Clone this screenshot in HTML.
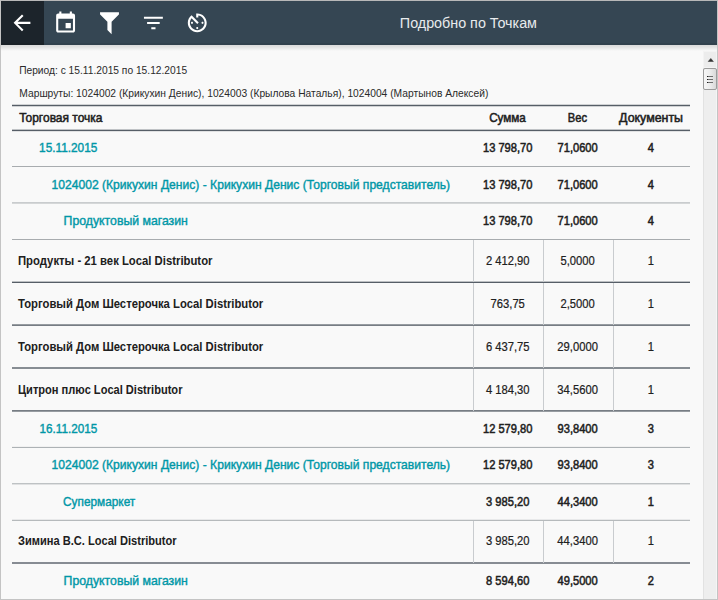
<!DOCTYPE html>
<html><head><meta charset="utf-8"><style>
html,body{margin:0;padding:0;}
body{width:718px;height:600px;overflow:hidden;position:relative;background:#f9f9f9;font-family:"Liberation Sans", sans-serif;}
svg text{font-family:"Liberation Sans", sans-serif;white-space:pre;}
</style></head><body>
<div style="position:absolute;left:12px;top:104px;width:678px;height:1px;background:#d0d2d4"></div>
<div style="position:absolute;left:12px;top:105px;width:678px;height:1px;background:#565e67"></div>
<div style="position:absolute;left:12px;top:106px;width:678px;height:1px;background:#d0d2d4"></div>
<div style="position:absolute;left:12px;top:129px;width:678px;height:1px;background:#c0c3c6"></div>
<div style="position:absolute;left:12px;top:130px;width:678px;height:1px;background:#565e67"></div>
<div style="position:absolute;left:12px;top:131px;width:678px;height:1px;background:#e1e2e3"></div>
<div style="position:absolute;left:12px;top:166px;width:678px;height:1px;background:#a8acaf"></div>
<div style="position:absolute;left:12px;top:202px;width:678px;height:1px;background:#c9ccce"></div>
<div style="position:absolute;left:12px;top:203px;width:678px;height:1px;background:#d5d7d8"></div>
<div style="position:absolute;left:12px;top:239px;width:678px;height:1px;background:#a8acaf"></div>
<div style="position:absolute;left:12px;top:281px;width:678px;height:1px;background:#bdc0c3"></div>
<div style="position:absolute;left:12px;top:282px;width:678px;height:1px;background:#565e67"></div>
<div style="position:absolute;left:12px;top:324px;width:678px;height:1px;background:#979ca1"></div>
<div style="position:absolute;left:12px;top:325px;width:678px;height:1px;background:#777d84"></div>
<div style="position:absolute;left:12px;top:367px;width:678px;height:1px;background:#878d93"></div>
<div style="position:absolute;left:12px;top:368px;width:678px;height:1px;background:#878d93"></div>
<div style="position:absolute;left:12px;top:410px;width:678px;height:1px;background:#777d84"></div>
<div style="position:absolute;left:12px;top:411px;width:678px;height:1px;background:#979ca1"></div>
<div style="position:absolute;left:12px;top:446px;width:678px;height:1px;background:#f1f1f1"></div>
<div style="position:absolute;left:12px;top:447px;width:678px;height:1px;background:#adb2b5"></div>
<div style="position:absolute;left:12px;top:483px;width:678px;height:1px;background:#bec2c4"></div>
<div style="position:absolute;left:12px;top:484px;width:678px;height:1px;background:#e0e1e2"></div>
<div style="position:absolute;left:12px;top:519px;width:678px;height:1px;background:#e8e9ea"></div>
<div style="position:absolute;left:12px;top:520px;width:678px;height:1px;background:#b6babc"></div>
<div style="position:absolute;left:12px;top:562px;width:678px;height:1px;background:#878c93"></div>
<div style="position:absolute;left:12px;top:563px;width:678px;height:1px;background:#878c93"></div>
<div style="position:absolute;left:473px;top:240px;width:1px;height:42px;background:#c9cccf"></div>
<div style="position:absolute;left:543px;top:240px;width:1px;height:42px;background:#c9cccf"></div>
<div style="position:absolute;left:613px;top:240px;width:1px;height:42px;background:#c9cccf"></div>
<div style="position:absolute;left:473px;top:283px;width:1px;height:42px;background:#c9cccf"></div>
<div style="position:absolute;left:543px;top:283px;width:1px;height:42px;background:#c9cccf"></div>
<div style="position:absolute;left:613px;top:283px;width:1px;height:42px;background:#c9cccf"></div>
<div style="position:absolute;left:473px;top:326px;width:1px;height:42px;background:#c9cccf"></div>
<div style="position:absolute;left:543px;top:326px;width:1px;height:42px;background:#c9cccf"></div>
<div style="position:absolute;left:613px;top:326px;width:1px;height:42px;background:#c9cccf"></div>
<div style="position:absolute;left:473px;top:369px;width:1px;height:42px;background:#c9cccf"></div>
<div style="position:absolute;left:543px;top:369px;width:1px;height:42px;background:#c9cccf"></div>
<div style="position:absolute;left:613px;top:369px;width:1px;height:42px;background:#c9cccf"></div>
<div style="position:absolute;left:473px;top:521px;width:1px;height:42px;background:#c9cccf"></div>
<div style="position:absolute;left:543px;top:521px;width:1px;height:42px;background:#c9cccf"></div>
<div style="position:absolute;left:613px;top:521px;width:1px;height:42px;background:#c9cccf"></div>
<div style="position:absolute;left:1px;top:1px;width:716px;height:44px;background:#354653"></div>
<div style="position:absolute;left:1px;top:1px;width:43px;height:44px;background:#1c242b"></div>
<div style="position:absolute;left:1px;top:43px;width:716px;height:2px;background:rgba(0,0,0,0.07)"></div>
<div style="position:absolute;left:1px;top:45px;width:716px;height:6px;background:linear-gradient(to bottom, rgba(0,0,0,0.12), rgba(0,0,0,0.1) 25%, rgba(0,0,0,0.0))"></div>
<svg style="position:absolute;left:0;top:0" width="718" height="600" viewBox="0 0 718 600">
<g fill="#ffffff"><g transform="translate(9.400 10.250) scale(1.05)"><path d="M20 11H7.83l5.59-5.59L12 4l-8 8 8 8 1.41-1.41L7.83 13H20v-2z"/></g><g transform="translate(53.000 10.450) scale(1.05)"><path d="M17 12h-5v5h5v-5zM16 1v2H8V1H6v2H5c-1.11 0-1.99.9-1.99 2L3 19c0 1.1.89 2 2 2h14c1.1 0 2-.9 2-2V5c0-1.1-.9-2-2-2h-1V1h-2zm3 18H5V8h14v11z"/></g><g transform="translate(96.900 10.178) scale(1.05)"><path d="M3,2H21V4H20.92L14,10.92V22.91L10,18.91V10.91L3.09,4H3V2Z"/></g><g transform="translate(140.800 10.400) scale(1.05)"><path d="M10 18h4v-2h-4v2zM3 6v2h18V6H3zm3 7h12v-2H6v2z"/></g><g transform="translate(184.650 10.250) scale(1.05)"><path d="M11 17c0 .55.45 1 1 1s1-.45 1-1-.45-1-1-1-1 .45-1 1zm0-14v4h2V5.08c3.39.49 6 3.39 6 6.92 0 3.87-3.13 7-7 7s-7-3.13-7-7c0-1.68.59-3.22 1.58-4.5L12 13l1.41-1.41-6.8-6.8v.02C4.42 6.45 3 9.05 3 12c0 4.97 4.02 9 9 9 4.97 0 9-4.03 9-9s-4.03-9-9-9h-1zm7 9c0-.55-.45-1-1-1s-1 .45-1 1 .45 1 1 1 1-.45 1-1zM6 12c0 .55.45 1 1 1s1-.45 1-1-.45-1-1-1-1 .45-1 1z"/></g></g>
<text x="399.85" y="27.90" font-size="15.1" font-weight="400" fill="#e8ebed" textLength="137.11" lengthAdjust="spacingAndGlyphs">Подробно по Точкам</text>
<text x="19.13" y="73.70" font-size="11.2" font-weight="400" fill="#2a2a2a" textLength="167.97" lengthAdjust="spacingAndGlyphs">Период: с 15.11.2015 по 15.12.2015</text>
<text x="19.30" y="96.90" font-size="11.2" font-weight="400" fill="#2a2a2a" textLength="469.05" lengthAdjust="spacingAndGlyphs">Маршруты: 1024002 (Крикухин Денис), 1024003 (Крылова Наталья), 1024004 (Мартынов Алексей)</text>
<text x="19.15" y="121.90" font-size="11.9" font-weight="400" fill="#202020" stroke="#202020" stroke-width="0.5" textLength="83.41" lengthAdjust="spacingAndGlyphs">Торговая точка</text>
<text x="489.15" y="121.90" font-size="11.9" font-weight="400" fill="#202020" stroke="#202020" stroke-width="0.5" textLength="36.72" lengthAdjust="spacingAndGlyphs">Сумма</text>
<text x="567.75" y="121.90" font-size="11.9" font-weight="400" fill="#202020" stroke="#202020" stroke-width="0.5" textLength="19.25" lengthAdjust="spacingAndGlyphs">Вес</text>
<text x="619.12" y="121.90" font-size="11.9" font-weight="400" fill="#202020" stroke="#202020" stroke-width="0.5" textLength="63.92" lengthAdjust="spacingAndGlyphs">Документы</text>
<text x="39.09" y="151.80" font-size="11.9" font-weight="400" fill="#0097a7" stroke="#0097a7" stroke-width="0.38" textLength="58.24" lengthAdjust="spacingAndGlyphs">15.11.2015</text>
<text x="482.99" y="151.80" font-size="11.9" font-weight="400" fill="#202020" stroke="#202020" stroke-width="0.5" textLength="49.46" lengthAdjust="spacingAndGlyphs">13 798,70</text>
<text x="557.53" y="151.80" font-size="11.9" font-weight="400" fill="#202020" stroke="#202020" stroke-width="0.5" textLength="40.19" lengthAdjust="spacingAndGlyphs">71,0600</text>
<text x="647.73" y="151.80" font-size="11.9" font-weight="400" fill="#202020" stroke="#202020" stroke-width="0.5" textLength="6.18" lengthAdjust="spacingAndGlyphs">4</text>
<text x="51.54" y="188.60" font-size="11.9" font-weight="400" fill="#0097a7" stroke="#0097a7" stroke-width="0.38" textLength="398.63" lengthAdjust="spacingAndGlyphs">1024002 (Крикухин Денис) - Крикухин Денис (Торговый представитель)</text>
<text x="482.99" y="188.60" font-size="11.9" font-weight="400" fill="#202020" stroke="#202020" stroke-width="0.5" textLength="49.46" lengthAdjust="spacingAndGlyphs">13 798,70</text>
<text x="557.53" y="188.60" font-size="11.9" font-weight="400" fill="#202020" stroke="#202020" stroke-width="0.5" textLength="40.19" lengthAdjust="spacingAndGlyphs">71,0600</text>
<text x="647.73" y="188.60" font-size="11.9" font-weight="400" fill="#202020" stroke="#202020" stroke-width="0.5" textLength="6.18" lengthAdjust="spacingAndGlyphs">4</text>
<text x="63.59" y="224.70" font-size="11.9" font-weight="400" fill="#0097a7" stroke="#0097a7" stroke-width="0.38" textLength="124.30" lengthAdjust="spacingAndGlyphs">Продуктовый магазин</text>
<text x="482.99" y="224.70" font-size="11.9" font-weight="400" fill="#202020" stroke="#202020" stroke-width="0.5" textLength="49.46" lengthAdjust="spacingAndGlyphs">13 798,70</text>
<text x="557.53" y="224.70" font-size="11.9" font-weight="400" fill="#202020" stroke="#202020" stroke-width="0.5" textLength="40.19" lengthAdjust="spacingAndGlyphs">71,0600</text>
<text x="647.73" y="224.70" font-size="11.9" font-weight="400" fill="#202020" stroke="#202020" stroke-width="0.5" textLength="6.18" lengthAdjust="spacingAndGlyphs">4</text>
<text x="17.97" y="264.60" font-size="11.9" font-weight="700" fill="#202020" textLength="194.48" lengthAdjust="spacingAndGlyphs">Продукты - 21 век Local Distributor</text>
<text x="485.89" y="264.60" font-size="11.9" font-weight="400" fill="#202020" stroke="#202020" stroke-width="0.2" textLength="43.65" lengthAdjust="spacingAndGlyphs">2 412,90</text>
<text x="560.47" y="264.60" font-size="11.9" font-weight="400" fill="#202020" stroke="#202020" stroke-width="0.2" textLength="34.30" lengthAdjust="spacingAndGlyphs">5,0000</text>
<text x="647.70" y="264.60" font-size="11.9" font-weight="400" fill="#202020" stroke="#202020" stroke-width="0.2" textLength="6.24" lengthAdjust="spacingAndGlyphs">1</text>
<text x="18.00" y="307.60" font-size="11.9" font-weight="700" fill="#202020" textLength="245.25" lengthAdjust="spacingAndGlyphs">Торговый Дом Шестерочка Local Distributor</text>
<text x="490.57" y="307.60" font-size="11.9" font-weight="400" fill="#202020" stroke="#202020" stroke-width="0.2" textLength="34.30" lengthAdjust="spacingAndGlyphs">763,75</text>
<text x="560.47" y="307.60" font-size="11.9" font-weight="400" fill="#202020" stroke="#202020" stroke-width="0.2" textLength="34.30" lengthAdjust="spacingAndGlyphs">2,5000</text>
<text x="647.70" y="307.60" font-size="11.9" font-weight="400" fill="#202020" stroke="#202020" stroke-width="0.2" textLength="6.24" lengthAdjust="spacingAndGlyphs">1</text>
<text x="18.00" y="350.50" font-size="11.9" font-weight="700" fill="#202020" textLength="245.25" lengthAdjust="spacingAndGlyphs">Торговый Дом Шестерочка Local Distributor</text>
<text x="485.89" y="350.50" font-size="11.9" font-weight="400" fill="#202020" stroke="#202020" stroke-width="0.2" textLength="43.65" lengthAdjust="spacingAndGlyphs">6 437,75</text>
<text x="557.35" y="350.50" font-size="11.9" font-weight="400" fill="#202020" stroke="#202020" stroke-width="0.2" textLength="40.54" lengthAdjust="spacingAndGlyphs">29,0000</text>
<text x="647.70" y="350.50" font-size="11.9" font-weight="400" fill="#202020" stroke="#202020" stroke-width="0.2" textLength="6.24" lengthAdjust="spacingAndGlyphs">1</text>
<text x="18.00" y="393.50" font-size="11.9" font-weight="700" fill="#202020" textLength="164.45" lengthAdjust="spacingAndGlyphs">Цитрон плюс Local Distributor</text>
<text x="485.89" y="393.50" font-size="11.9" font-weight="400" fill="#202020" stroke="#202020" stroke-width="0.2" textLength="43.65" lengthAdjust="spacingAndGlyphs">4 184,30</text>
<text x="557.35" y="393.50" font-size="11.9" font-weight="400" fill="#202020" stroke="#202020" stroke-width="0.2" textLength="40.54" lengthAdjust="spacingAndGlyphs">34,5600</text>
<text x="647.70" y="393.50" font-size="11.9" font-weight="400" fill="#202020" stroke="#202020" stroke-width="0.2" textLength="6.24" lengthAdjust="spacingAndGlyphs">1</text>
<text x="39.59" y="432.70" font-size="11.9" font-weight="400" fill="#0097a7" stroke="#0097a7" stroke-width="0.38" textLength="57.64" lengthAdjust="spacingAndGlyphs">16.11.2015</text>
<text x="482.99" y="432.70" font-size="11.9" font-weight="400" fill="#202020" stroke="#202020" stroke-width="0.5" textLength="49.46" lengthAdjust="spacingAndGlyphs">12 579,80</text>
<text x="557.53" y="432.70" font-size="11.9" font-weight="400" fill="#202020" stroke="#202020" stroke-width="0.5" textLength="40.19" lengthAdjust="spacingAndGlyphs">93,8400</text>
<text x="647.73" y="432.70" font-size="11.9" font-weight="400" fill="#202020" stroke="#202020" stroke-width="0.5" textLength="6.18" lengthAdjust="spacingAndGlyphs">3</text>
<text x="51.54" y="469.20" font-size="11.9" font-weight="400" fill="#0097a7" stroke="#0097a7" stroke-width="0.38" textLength="398.63" lengthAdjust="spacingAndGlyphs">1024002 (Крикухин Денис) - Крикухин Денис (Торговый представитель)</text>
<text x="482.99" y="469.20" font-size="11.9" font-weight="400" fill="#202020" stroke="#202020" stroke-width="0.5" textLength="49.46" lengthAdjust="spacingAndGlyphs">12 579,80</text>
<text x="557.53" y="469.20" font-size="11.9" font-weight="400" fill="#202020" stroke="#202020" stroke-width="0.5" textLength="40.19" lengthAdjust="spacingAndGlyphs">93,8400</text>
<text x="647.73" y="469.20" font-size="11.9" font-weight="400" fill="#202020" stroke="#202020" stroke-width="0.5" textLength="6.18" lengthAdjust="spacingAndGlyphs">3</text>
<text x="63.09" y="505.50" font-size="11.9" font-weight="400" fill="#0097a7" stroke="#0097a7" stroke-width="0.38" textLength="72.17" lengthAdjust="spacingAndGlyphs">Супермаркет</text>
<text x="486.08" y="505.50" font-size="11.9" font-weight="400" fill="#202020" stroke="#202020" stroke-width="0.5" textLength="43.27" lengthAdjust="spacingAndGlyphs">3 985,20</text>
<text x="557.53" y="505.50" font-size="11.9" font-weight="400" fill="#202020" stroke="#202020" stroke-width="0.5" textLength="40.19" lengthAdjust="spacingAndGlyphs">44,3400</text>
<text x="647.73" y="505.50" font-size="11.9" font-weight="400" fill="#202020" stroke="#202020" stroke-width="0.5" textLength="6.18" lengthAdjust="spacingAndGlyphs">1</text>
<text x="18.00" y="545.40" font-size="11.9" font-weight="700" fill="#202020" textLength="158.65" lengthAdjust="spacingAndGlyphs">Зимина В.С. Local Distributor</text>
<text x="485.89" y="545.40" font-size="11.9" font-weight="400" fill="#202020" stroke="#202020" stroke-width="0.2" textLength="43.65" lengthAdjust="spacingAndGlyphs">3 985,20</text>
<text x="557.35" y="545.40" font-size="11.9" font-weight="400" fill="#202020" stroke="#202020" stroke-width="0.2" textLength="40.54" lengthAdjust="spacingAndGlyphs">44,3400</text>
<text x="647.70" y="545.40" font-size="11.9" font-weight="400" fill="#202020" stroke="#202020" stroke-width="0.2" textLength="6.24" lengthAdjust="spacingAndGlyphs">1</text>
<text x="63.59" y="585.00" font-size="11.9" font-weight="400" fill="#0097a7" stroke="#0097a7" stroke-width="0.38" textLength="124.30" lengthAdjust="spacingAndGlyphs">Продуктовый магазин</text>
<text x="486.08" y="585.00" font-size="11.9" font-weight="400" fill="#202020" stroke="#202020" stroke-width="0.5" textLength="43.27" lengthAdjust="spacingAndGlyphs">8 594,60</text>
<text x="557.53" y="585.00" font-size="11.9" font-weight="400" fill="#202020" stroke="#202020" stroke-width="0.5" textLength="40.19" lengthAdjust="spacingAndGlyphs">49,5000</text>
<text x="647.73" y="585.00" font-size="11.9" font-weight="400" fill="#202020" stroke="#202020" stroke-width="0.5" textLength="6.18" lengthAdjust="spacingAndGlyphs">2</text>
</svg>
<div style="position:absolute;left:703px;top:51px;width:14px;height:548px;background:#eeeeee;border-left:1px solid #e2e2e2;box-sizing:border-box"></div>
<div style="position:absolute;left:716px;top:51px;width:1px;height:548px;background:#f5f5f5"></div>
<div style="position:absolute;left:703px;top:51px;width:14px;height:17px;background:#ececec;box-sizing:border-box;border:1px solid #f3f3f3"></div>
<svg style="position:absolute;left:700px;top:50px" width="18" height="18" viewBox="0 0 18 18"><path d="M8.2 11.5 L10.8 8.4 L13.4 11.5 Z" fill="#333" stroke="#333" stroke-width="0.5" stroke-linejoin="round"/></svg>
<div style="position:absolute;left:703px;top:68px;width:13.5px;height:21.5px;box-sizing:border-box;border:1px solid #9c9c9c;border-radius:2px;background:linear-gradient(to right,#f6f6f6,#ececec 50%,#d9d9d9)"></div>
<div style="position:absolute;left:707px;top:76px;width:6px;height:1px;background:linear-gradient(to right,#1e1e1e 0,#1e1e1e 1px,#6e6e6e 1px);box-shadow:0 3px 0 #6e6e6e, 0 6px 0 #6e6e6e"></div>
<div style="position:absolute;left:707px;top:79px;width:1px;height:1px;background:#1e1e1e"></div>
<div style="position:absolute;left:707px;top:82px;width:1px;height:1px;background:#1e1e1e"></div>
<div style="position:absolute;left:0;top:0;width:718px;height:600px;box-sizing:border-box;border:1px solid #c4c4c4;border-top-color:#b8b8b8;pointer-events:none"></div>
</body></html>
